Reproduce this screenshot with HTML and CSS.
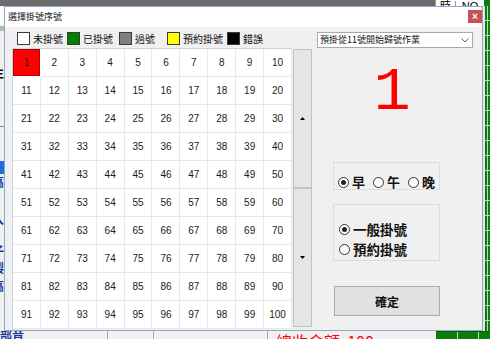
FILE: index.html
```html
<!DOCTYPE html>
<html lang="zh-Hant">
<head>
<meta charset="utf-8">
<title>選擇掛號序號</title>
<link rel="stylesheet" href="styles.css">
</head>
<body>
<div class="desk">
  <div class="topbar">
    <div class="tb-dark"></div>
    <div class="tb-table"><span class="tb-c1">時</span><span class="tb-c2">NO</span></div>
    <div class="tb-green"></div>
  </div>
  <div class="middle">
    <div class="leftstrip">
      <span class="ls ls-a"></span>
      <span class="ls ls-b"></span>
      <span class="ls ls-c">生</span>
      <span class="ls ls-d">:</span>
      <span class="ls ls-e"></span>
      <span class="ls ls-f">~</span>
      <span class="ls ls-g"></span>
      <span class="ls ls-h">高</span>
      <span class="ls ls-i">I</span>
      <span class="ls ls-j">入</span>
      <span class="ls ls-k">子</span>
      <span class="ls ls-l">製</span>
      <span class="ls ls-m">高</span>
    </div>
    <div class="mid-fill"></div>
    <div class="rightstrip"></div>
  </div>
  <div class="bottom">
    <span class="bt-blue">部音</span>
    <span class="bt-sep bt-s1"></span>
    <span class="bt-sep bt-s2"></span>
    <span class="bt-sep bt-s3"></span>
    <span class="bt-red">總收金額&nbsp;&nbsp;100</span>
    <span class="bt-green"></span>
  </div>
</div>

<div class="dialog">
  <div class="titlebar">
    <span class="title">選擇掛號序號</span>
    <span class="close">×</span>
  </div>
  <div class="dbody">
    <div class="leftcol">
      <div class="legend">
        <span class="sq sq-white"></span><span class="lg lg1">未掛號</span>
        <span class="sq sq-green"></span><span class="lg lg2">已掛號</span>
        <span class="sq sq-grey"></span><span class="lg lg3">過號</span>
        <span class="sq sq-yellow"></span><span class="lg lg4">預約掛號</span>
        <span class="sq sq-black"></span><span class="lg lg5">錯誤</span>
      </div>
      <div class="gridwrap">
        <div class="grid" id="grid"></div>
        <div class="scroll">
          <div class="sbtn"><svg width="5" height="3" viewBox="0 0 5 3"><path d="M2.5 0 L5 3 L0 3 Z" fill="#000"/></svg></div>
          <div class="sbtn"><svg width="5" height="3" viewBox="0 0 5 3"><path d="M0 0 L5 0 L2.5 3 Z" fill="#000"/></svg></div>
        </div>
      </div>
    </div>
    <div class="rightcol">
      <div class="combo">
        <span class="combo-text">預掛從11號開始歸號作業</span>
        <svg class="chev" width="8" height="5" viewBox="0 0 8 5"><path d="M0.5 0.5 L4 4 L7.5 0.5" fill="none" stroke="#606060" stroke-width="1"/></svg>
      </div>
      <div class="bignum">1</div>
      <div class="group g1">
        <label class="radio r-a"><span class="dot on"></span><span class="rt">早</span></label>
        <label class="radio r-a"><span class="dot"></span><span class="rt">午</span></label>
        <label class="radio r-a"><span class="dot"></span><span class="rt">晚</span></label>
      </div>
      <div class="group g2">
        <label class="radio r-b"><span class="dot on"></span><span class="rt">一般掛號</span></label>
        <label class="radio r-b"><span class="dot"></span><span class="rt">預約掛號</span></label>
      </div>
      <button class="okbtn">確定</button>
    </div>
  </div>
</div>
<script>
  var g = document.getElementById('grid');
  for (var i = 1; i <= 100; i++) {
    var c = document.createElement('div');
    c.className = 'cell' + (i === 1 ? ' on' : '');
    c.textContent = i;
    g.appendChild(c);
  }
</script>
</body>
</html>
```
FILE: styles.css
```css
html, body {
  margin: 0;
  padding: 0;
}
body {
  width: 490px;
  height: 339px;
  overflow: hidden;
  position: relative;
  background: #f0f0f0;
  font-family: "Noto Sans CJK TC", "Liberation Sans", sans-serif;
  color: #000;
}

/* background application */
.desk {
  display: grid;
  grid-template-rows: 6px 325px 8px;
  width: 490px;
  height: 339px;
}
.topbar {
  display: flex;
  overflow: hidden;
}
.tb-dark {
  width: 435px;
  background: #6b6b6b;
}
.tb-table {
  width: 48px;
  background: #fff;
  border-left: 1px solid #9a9a9a;
  display: flex;
  align-items: flex-end;
  font-family: "Liberation Sans", "Noto Sans CJK TC", sans-serif;
  font-size: 11px;
  line-height: 11px;
  overflow: hidden;
}
.tb-c1 {
  width: 19px;
  text-align: center;
  border-right: 1px solid #9a9a9a;
  margin-bottom: -6px;
}
.tb-c2 {
  flex: 1;
  text-align: center;
  margin-bottom: -6px;
}
.tb-green {
  flex: 1;
  background: #0a7d0a;
}
.middle {
  display: flex;
}
.leftstrip {
  width: 4px;
  display: flex;
  flex-direction: column;
  overflow: hidden;
  background: #f0f0f0;
}
.ls {
  display: block;
  flex: none;
  overflow: hidden;
  font-size: 12px;
  line-height: 14px;
  height: 14px;
  margin-left: -8px;
  white-space: nowrap;
  color: #1b3a9a;
  font-weight: bold;
}
.ls-a { height: 19px; background: #fafafa; margin-left: 0; }
.ls-b { height: 5px; background: #a8bca8; margin-left: 0; margin-top: 1px; }
.ls-c { margin-top: 35px; color: #000; }
.ls-d { margin-top: 12px; color: #000; }
.ls-e { margin-top: 20px; height: 1px; background: #888; margin-left: 0; }
.ls-f { margin-top: 20px; height: 12px; }
.ls-g { margin-top: 2px; height: 13px; background: #1e6fd9; margin-left: 0; }
.ls-h { margin-top: 1px; }
.ls-i { margin-top: 6px; margin-left: -6px; height: 12px; }
.ls-j { margin-top: 5px; }
.ls-k { margin-top: 18px; }
.ls-l { margin-top: 3px; }
.ls-m { margin-top: 4px; }
.mid-fill {
  flex: 1;
}
.rightstrip {
  width: 7px;
  background:
    linear-gradient(90deg, #e4e4e4 0 2px, #0a7d0a 2px 4px, #b8dcb8 4px 5px, #0a7d0a 5px 7px),
    #0a7d0a;
}
.rightstrip::after {
  content: "";
  display: block;
  margin-left: 2px;
  height: 100%;
  background: repeating-linear-gradient(180deg, transparent 0 14px, #b8dcb8 14px 15px);
}
.bottom {
  display: flex;
  align-items: flex-start;
  overflow: hidden;
  background: #f0f0f0;
}
.bt-blue {
  color: #1b3a9a;
  font-weight: bold;
  font-size: 12px;
  line-height: 12px;
  margin-top: -2px;
  width: 24px;
}
.bt-sep {
  width: 1px;
  height: 8px;
  background: #a8a8a8;
}
.bt-s1 { margin-left: 83px; }
.bt-s2 { margin-left: 45px; }
.bt-s3 { margin-left: 113px; }
.bt-red {
  color: #ff0000;
  font-size: 16px;
  line-height: 16px;
  margin-left: 8px;
  margin-top: 2px;
  white-space: nowrap;
  width: 160px;
}
.bt-green {
  flex: 1;
  height: 8px;
  border-top: 1px solid #0a5c0a;
  background:
    linear-gradient(90deg, transparent 0 21px, #b8dcb8 21px 22px, transparent 22px 42px, #b8dcb8 42px 43px, transparent 43px),
    #0a7d0a;
}

/* dialog window */
.dialog {
  position: absolute;
  left: 4px;
  top: 6px;
  width: 479px;
  height: 325px;
  box-sizing: border-box;
  border: 1px solid #8fa9cc;
  background: #f0f0f0;
}
.titlebar {
  height: 20px;
  background: #fff;
  display: flex;
  align-items: center;
  justify-content: space-between;
  padding-left: 3px;
}
.title {
  font-size: 9px;
  line-height: 10px;
  color: #111;
}
.close {
  width: 14px;
  height: 13px;
  background: #c75050;
  color: #fff;
  font-family: "Liberation Sans", sans-serif;
  font-size: 10px;
  line-height: 13px;
  text-align: center;
  font-weight: bold;
  margin-top: -2px;
}
.dbody {
  display: flex;
  padding-left: 7px;
}
.leftcol {
  display: flex;
  flex-direction: column;
}
.legend {
  display: flex;
  align-items: center;
  height: 13px;
  margin: 5px 0 3px 5px;
}
.sq {
  width: 13px;
  height: 13px;
  box-sizing: border-box;
  border: 1px solid #3a3a3a;
  margin-right: 3px;
}
.sq-white { background: #fff; }
.sq-green { background: #008000; }
.sq-grey { background: #808080; }
.sq-yellow { background: #ffff00; }
.sq-black { background: #000; }
.lg {
  font-size: 10px;
  line-height: 13px;
  color: #111;
  white-space: nowrap;
}
.lg1 { margin-right: 4px; }
.lg2 { margin-right: 6px; }
.lg3 { margin-right: 12px; }
.lg4 { margin-right: 4px; }

.gridwrap {
  display: flex;
  align-items: flex-start;
}
.grid {
  width: 280px;
  box-sizing: border-box;
  border-top: 1px solid #c9d3de;
  border-left: 1px solid #c9d3de;
  background: #fff;
  display: grid;
  grid-template-columns: repeat(10, 1fr);
  grid-template-rows: repeat(10, 28px);
}
.cell {
  box-sizing: border-box;
  border-right: 1px solid #e8e8e8;
  border-bottom: 1px solid #e8e8e8;
  display: flex;
  align-items: center;
  justify-content: center;
  font-family: "Liberation Sans", sans-serif;
  font-size: 10px;
  color: #1a1a1a;
}
.cell.on {
  background: #ff0000;
  box-shadow: inset 0 0 0 1px #b40000;
  border-color: #ffffff;
}
.scroll {
  display: flex;
  flex-direction: column;
  margin-left: 1px;
  margin-top: 1px;
  width: 19px;
}
.sbtn {
  height: 139px;
  box-sizing: border-box;
  border: 1px solid #c3c3c3;
  background: #e5e5e5;
  display: flex;
  align-items: center;
  justify-content: center;
}

.rightcol {
  display: flex;
  flex-direction: column;
  align-items: flex-start;
  margin-left: 5px;
  width: 156px;
  padding-top: 5px;
}
.combo {
  width: 156px;
  height: 16px;
  box-sizing: border-box;
  border: 1px solid #a9a9a9;
  background: #fff;
  display: flex;
  align-items: center;
  justify-content: space-between;
  padding: 0 3px 0 2px;
}
.combo-text {
  font-size: 9px;
  line-height: 12px;
  color: #111;
  white-space: nowrap;
}
.bignum {
  margin-top: 17px;
  width: 150px;
  height: 56px;
  overflow: visible;
  font-family: "Liberation Mono", monospace;
  font-size: 62px;
  line-height: 56px;
  text-align: center;
  color: #ff0000;
}
.group {
  margin-left: 16px;
  width: 107px;
  box-sizing: border-box;
  border: 1px solid #dcdcdc;
  display: flex;
}
.g1 {
  margin-top: 41px;
  height: 28px;
  padding: 13px 0 0 4px;
}
.g2 {
  margin-top: 14px;
  height: 57px;
  flex-direction: column;
  padding: 18px 0 0 5px;
  gap: 8px;
}
.radio {
  display: flex;
  align-items: center;
  height: 12px;
}
.r-a { margin-right: 8px; }
.dot {
  width: 11px;
  height: 11px;
  box-sizing: border-box;
  border: 1px solid #333;
  border-radius: 50%;
  background: #fff;
  display: flex;
  align-items: center;
  justify-content: center;
}
.dot.on::after {
  content: "";
  width: 5px;
  height: 5px;
  border-radius: 50%;
  background: #222;
}
.rt {
  margin-left: 3px;
  font-size: 13px;
  line-height: 12px;
  font-weight: bold;
  color: #111;
  white-space: nowrap;
}
.r-b .rt {
  font-size: 13.5px;
}
.okbtn {
  margin-top: 25px;
  margin-left: 17px;
  width: 106px;
  height: 30px;
  box-sizing: border-box;
  border: 1px solid #adadad;
  background: #e1e1e1;
  font-family: "Noto Sans CJK TC", sans-serif;
  font-size: 12px;
  font-weight: bold;
  color: #111;
  padding: 0;
}
```
